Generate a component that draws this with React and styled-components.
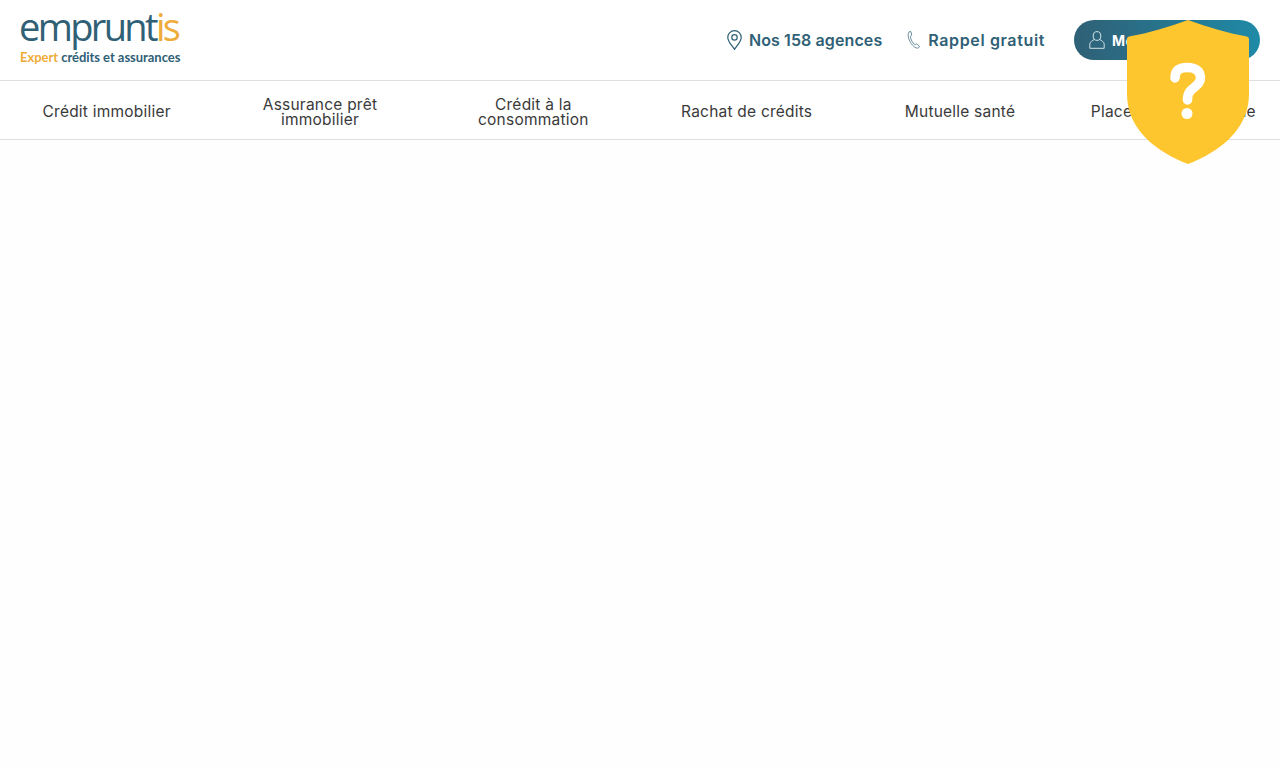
import React from "react";
import styled, { createGlobalStyle } from "styled-components";

const Global = createGlobalStyle`
  html, body {
    margin: 0;
    background: #fff;
  }
  body {
    font-family: "Inter", "Liberation Sans", sans-serif;
  }
`;

const Page = styled.div`
  position: relative;
  height: 768px;
  overflow: hidden;
  background: #fefefe;
`;

const Header = styled.header`
  display: flex;
  align-items: center;
  justify-content: space-between;
  height: 80px;
  padding: 0 20px;
  background: #fff;
  border-bottom: 1px solid #dfdfdf;
`;

const Logo = styled.a`
  display: flex;
  flex-direction: column;
  width: 162px;
  margin: -2px 0 0 -1px;
  font-family: "Open Sans", sans-serif;
`;

const LogoName = styled.span`
  font-size: 38px;
  line-height: 27px;
  letter-spacing: -2.65px;
  font-weight: 500;
  color: #2f6076;
  white-space: nowrap;
  em {
    font-style: normal;
    color: #f0ac3a;
  }
`;

const LogoTag = styled.span`
  margin: 10px 0 0 1px;
  font-family: "Lato", sans-serif;
  font-size: 13px;
  line-height: 15px;
  font-weight: 700;
  letter-spacing: -0.04px;
  color: #2f6076;
  white-space: nowrap;
  em {
    font-style: normal;
    color: #f0ac3a;
  }
`;

const Actions = styled.div`
  display: flex;
  align-items: center;
`;

const Action = styled.a`
  display: flex;
  align-items: center;
  gap: 7px;
  margin-right: ${(p) => p.$after}px;
  font-size: 16px;
  font-weight: 600;
  letter-spacing: ${(p) => p.$spacing}px;
  color: #2f6076;
  white-space: nowrap;
`;

const AccountButton = styled.a`
  display: flex;
  align-items: center;
  gap: 7px;
  width: 186px;
  height: 40px;
  box-sizing: border-box;
  padding-left: 15px;
  border-radius: 20px;
  background: linear-gradient(90deg, #2f6076 0%, #1f8aa6 100%);
  color: #fff;
  font-size: 14px;
  font-weight: 700;
  letter-spacing: 0.4px;
  white-space: nowrap;
`;

const Nav = styled.nav`
  display: grid;
  grid-template-columns: repeat(6, minmax(0, 1fr));
  height: 58px;
  background: #fff;
  border-bottom: 1px solid #dfdfdf;
`;

const NavItem = styled.a`
  display: flex;
  align-items: center;
  justify-content: center;
  padding: 3px 40px 0;
  text-align: center;
  font-size: 15.5px;
  line-height: 15px;
  letter-spacing: 0.22px;
  color: #3a3a3a;
  white-space: ${(p) => (p.$wrap ? "normal" : "nowrap")};
`;

const ShieldBadge = styled.svg`
  position: absolute;
  top: 20px;
  left: 1127px;
  width: 122px;
  height: 144px;
`;

const PinIcon = () => (
  <svg width="15" height="20" viewBox="0 0 15 20" fill="none" stroke="#2f6076" strokeWidth="1.2">
    <path d="M7.5 19.4C5.2 15.6.8 11.8.8 7.4a6.7 6.7 0 0 1 13.4 0C14.2 11.8 9.8 15.6 7.5 19.4Z" />
    <circle cx="7.5" cy="7.4" r="2.7" />
  </svg>
);

const PhoneIcon = () => (
  <svg width="14" height="20" viewBox="0 0 16 20" fill="none" stroke="#2f6076" strokeWidth="0.8">
    <path d="M2.4.6 4.6.5 5.4 4.6 3.9 5.8C4 9.4 6.6 14 9.3 15.3L11 14.4 14.3 17.3 12.9 19.2C9.9 20.2 5.3 15.8 3 11 1.2 7.2.6 3 2.4.6Z" />
  </svg>
);

const UserIcon = () => (
  <svg width="16" height="18" viewBox="0 0 16 18" fill="none" stroke="#e4eef2" strokeWidth="0.9">
    <ellipse cx="8" cy="5" rx="3.8" ry="4.4" />
    <path d="M5.4 8.4C3.4 9.8.8 10.8.8 13.2V17.3H15.2V13.2C15.2 10.8 12.6 9.8 10.6 8.4" />
  </svg>
);

const Shield = () => (
  <ShieldBadge viewBox="0 0 122 144">
    <path
      d="M61 0C80 7 100 13 120 16.5Q122 17 122 19V74C122 110 92 132 61 144 30 132 0 110 0 74V19Q0 17 2 16.5C22 13 42 7 61 0Z"
      fill="#fec62e"
    />
    <path
      d="M48 58C48 50 53 47.5 60.5 47.5 68 47.5 73.5 51 73.5 58 73.5 65 66 67 62.5 72 61 74 60.5 77 60.5 80"
      fill="none"
      stroke="#fff"
      strokeWidth="9.5"
      strokeLinecap="round"
    />
    <circle cx="60" cy="93.5" r="5.5" fill="#fff" />
  </ShieldBadge>
);

const App = () => (
  <Page>
    <Global />
    <Header>
      <Logo>
        <LogoName>
          emprunt<em>is</em>
        </LogoName>
        <LogoTag>
          <em>Expert</em> crédits et assurances
        </LogoTag>
      </Logo>
      <Actions>
        <Action $after={25} $spacing={0.1}>
          <PinIcon />
          Nos 158 agences
        </Action>
        <Action $after={29} $spacing={0.63}>
          <PhoneIcon />
          Rappel gratuit
        </Action>
        <AccountButton>
          <UserIcon />
          Mon espace client
        </AccountButton>
      </Actions>
    </Header>
    <Nav>
      <NavItem>Crédit immobilier</NavItem>
      <NavItem $wrap>Assurance prêt immobilier</NavItem>
      <NavItem $wrap>Crédit à la consommation</NavItem>
      <NavItem>Rachat de crédits</NavItem>
      <NavItem>Mutuelle santé</NavItem>
      <NavItem>Placement et épargne</NavItem>
    </Nav>
    <Shield />
  </Page>
);

export default App;
